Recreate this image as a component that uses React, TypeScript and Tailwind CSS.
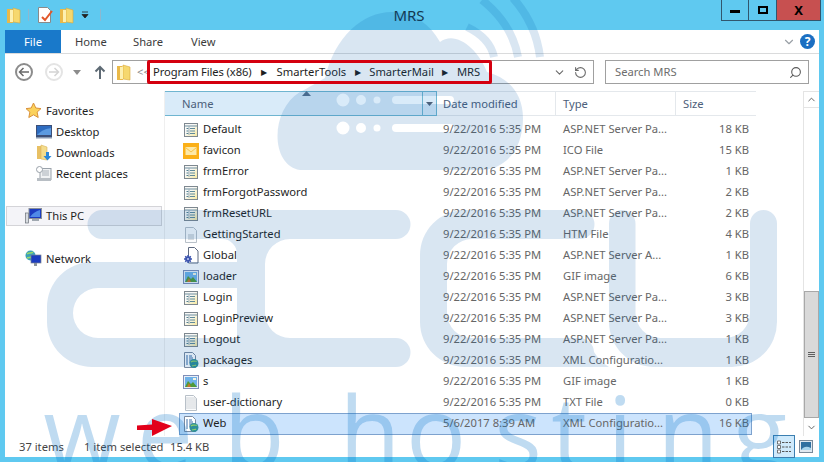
import { ChevronDown, ChevronUp, RotateCw, Search } from 'lucide-react';

type Kind = 'aspx' | 'ico' | 'htm' | 'asax' | 'gif' | 'xml' | 'txt';

const files: { name: string; date: string; type: string; size: string; kind: Kind }[] = [
  { name: 'Default', date: '9/22/2016 5:35 PM', type: 'ASP.NET Server Pa...', size: '18 KB', kind: 'aspx' },
  { name: 'favicon', date: '9/22/2016 5:35 PM', type: 'ICO File', size: '15 KB', kind: 'ico' },
  { name: 'frmError', date: '9/22/2016 5:35 PM', type: 'ASP.NET Server Pa...', size: '1 KB', kind: 'aspx' },
  { name: 'frmForgotPassword', date: '9/22/2016 5:35 PM', type: 'ASP.NET Server Pa...', size: '2 KB', kind: 'aspx' },
  { name: 'frmResetURL', date: '9/22/2016 5:35 PM', type: 'ASP.NET Server Pa...', size: '2 KB', kind: 'aspx' },
  { name: 'GettingStarted', date: '9/22/2016 5:35 PM', type: 'HTM File', size: '4 KB', kind: 'htm' },
  { name: 'Global', date: '9/22/2016 5:35 PM', type: 'ASP.NET Server A...', size: '1 KB', kind: 'asax' },
  { name: 'loader', date: '9/22/2016 5:35 PM', type: 'GIF image', size: '6 KB', kind: 'gif' },
  { name: 'Login', date: '9/22/2016 5:35 PM', type: 'ASP.NET Server Pa...', size: '3 KB', kind: 'aspx' },
  { name: 'LoginPreview', date: '9/22/2016 5:35 PM', type: 'ASP.NET Server Pa...', size: '3 KB', kind: 'aspx' },
  { name: 'Logout', date: '9/22/2016 5:35 PM', type: 'ASP.NET Server Pa...', size: '1 KB', kind: 'aspx' },
  { name: 'packages', date: '9/22/2016 5:35 PM', type: 'XML Configuratio...', size: '1 KB', kind: 'xml' },
  { name: 's', date: '9/22/2016 5:35 PM', type: 'GIF image', size: '1 KB', kind: 'gif' },
  { name: 'user-dictionary', date: '9/22/2016 5:35 PM', type: 'TXT File', size: '0 KB', kind: 'txt' },
];

const webLetters = [
  ['w', 82], ['e', 165], ['b', 254], ['h', 370], ['o', 436], ['s', 518],
  ['t', 569], ['i', 620], ['n', 688], ['g', 760],
] as const;

function FolderIcon() {
  return (
    <svg width="16" height="18" viewBox="0 0 16 18">
      <path d="M1 3h5l1 1v13H1z" fill="#eab948" />
      <path d="M7 2l7 2v13l-7-1z" fill="#f6d86e" stroke="#d9a83a" strokeWidth="0.6" />
      <path d="M4 4h3v12H4z" fill="#fdf0b0" />
    </svg>
  );
}

function FileIcon({ kind }: { kind: Kind }) {
  if (kind === 'ico') {
    return (
      <svg width="16" height="16" viewBox="0 0 16 16">
        <rect width="16" height="16" fill="#fbb018" />
        <rect x="2.500" y="4" width="11" height="8" fill="#fde9a8" />
        <path d="M2.500 4.500L8 9l5.500-4.500" fill="none" stroke="#f6c34a" />
      </svg>
    );
  }
  if (kind === 'gif') {
    return (
      <svg width="16" height="14" viewBox="0 0 16 14">
        <rect x="0.500" y="0.500" width="15" height="13" fill="#e8eef8" stroke="#7f8fb8" />
        <rect x="2" y="2" width="12" height="10" fill="#6fb2e8" />
        <path d="M2 12l3-6 3 3 2-2 4 5z" fill="#4f9a3a" />
        <path d="M4 12l2-4 2 4z" fill="#c9762c" />
        <rect x="10" y="3" width="3" height="2" fill="#f4f4e0" />
      </svg>
    );
  }
  if (kind === 'htm' || kind === 'txt') {
    return (
      <svg width="16" height="16" viewBox="0 0 16 16">
        <path d="M2.500 0.500h8l3 3v12h-11z" fill="#fbfcfd" stroke="#b8c0c8" />
        {kind === 'htm' ? (
          <path d="M5 8h6M5 10h6M5 12h6" stroke="#b4bcc4" />
        ) : (
          <path d="M3 3h10M3 5h10M3 7h10M3 9h10M3 11h10M3 13h10" stroke="#d0d4d8" />
        )}
      </svg>
    );
  }
  if (kind === 'asax') {
    return (
      <svg width="16" height="17" viewBox="0 0 16 17">
        <path d="M5.500 0.500h6l3.500 3.500v12h-9.500z" fill="#fff" stroke="#5f6a80" />
        <path d="M5 8v8M1 12h8M2.200 9.200l5.600 5.600M7.800 9.200l-5.600 5.600" stroke="#3d55b0" strokeWidth="1.400" />
        <circle cx="5" cy="12" r="2.800" fill="#3d55b0" />
        <circle cx="5" cy="12" r="1" fill="#c6d2f4" />
      </svg>
    );
  }
  if (kind === 'xml') {
    return (
      <svg width="16" height="17" viewBox="0 0 16 17">
        <path d="M1.500 0.500h8l3 3v12h-11z" fill="#fff" stroke="#7a8aa0" />
        <path d="M3 4h2M6 4h3M3 6h2M6 6h4M3 8h2M6 8h4M3 10h2M6 10h2M3 12h2" stroke="#3a6ea8" />
        <circle cx="11" cy="11.500" r="4.500" fill="#2f8f9a" />
        <path d="M8 10c2-2 4 0 6-1M9 14c2-1 3 0 4-1" stroke="#8ed06a" fill="none" strokeWidth="1.200" />
      </svg>
    );
  }
  return (
    <svg width="16" height="16" viewBox="0 0 16 16">
      <defs>
        <linearGradient id="aspxFill" x1="0" y1="0" x2="1" y2="1">
          <stop offset="0.400" stopColor="#f8f8f6" />
          <stop offset="1" stopColor="#f6e89a" />
        </linearGradient>
      </defs>
      <rect x="1.500" y="1.500" width="13" height="13" fill="url(#aspxFill)" stroke="#7e8890" />
      <path d="M2 4h12" stroke="#6f8f9f" />
      <path d="M3.500 6h2v1h-2zM3.500 8.500h2v1h-2zM3.500 11h2v1h-2z" fill="#4f7f8f" />
      <path d="M7 6.500h5M7 9h5M7 11.500h5" stroke="#5f8a9a" />
      <path d="M6 4v9" stroke="#9fb0b8" />
    </svg>
  );
}

function NavIcon({ name }: { name: string }) {
  if (name === 'star') {
    return (
      <svg width="17" height="17" viewBox="0 0 17 17">
        <path d="M8.500 1l2.300 5 5.200.6-3.900 3.500 1.100 5.400-4.700-2.700-4.700 2.700 1.100-5.400L1 6.600l5.200-.6z" fill="#fbd25c" stroke="#d9913a" />
      </svg>
    );
  }
  if (name === 'desktop') {
    return (
      <svg width="16" height="14" viewBox="0 0 16 14">
        <rect width="16" height="12" fill="#3c4f78" />
        <rect x="1" y="1" width="14" height="9" fill="#2e6cc0" />
        <path d="M1 10c5-5 9-6 14-7v7z" fill="#5c9ae0" />
        <rect y="12" width="16" height="1.500" fill="#8898b0" />
      </svg>
    );
  }
  if (name === 'downloads') {
    return (
      <svg width="16" height="17" viewBox="0 0 16 17">
        <path d="M1 2h5v13H1z" fill="#e8c064" />
        <path d="M5 1l6 2v13l-6-1z" fill="#f4dc8c" stroke="#d9b45a" strokeWidth="0.600" />
        <path d="M10 8h3v4h2.500l-4 4.500-4-4.500H10z" fill="#2a86d8" />
      </svg>
    );
  }
  if (name === 'recent') {
    return (
      <svg width="16" height="16" viewBox="0 0 16 16">
        <rect x="4" y="2.500" width="11" height="11" fill="#f0f2f4" stroke="#9aa2aa" />
        <path d="M6 5h7M6 7h7M6 9h7" stroke="#a8b0b8" />
        <circle cx="3.500" cy="3.500" r="3" fill="#fff" stroke="#98a0a8" />
        <rect x="1" y="12" width="14" height="3" fill="#b8bec4" />
      </svg>
    );
  }
  if (name === 'pc') {
    return (
      <svg width="17" height="16" viewBox="0 0 17 16">
        <rect x="0.500" y="5" width="3" height="10" fill="#d8dce0" stroke="#6a7078" strokeWidth="0.700" />
        <rect x="4" y="0.500" width="12.500" height="10" fill="#1c3cc0" stroke="#8a9098" />
        <path d="M5 9c3-4 6-6 10-7v7z" fill="#4f8ae8" />
        <rect x="7" y="11" width="7" height="2" fill="#a0a8b0" />
      </svg>
    );
  }
  return (
    <svg width="17" height="17" viewBox="0 0 17 17">
      <circle cx="5.500" cy="5.500" r="5" fill="#3aa0b8" />
      <path d="M2 4c2-2 4 0 6-2M2 8c2-1 3 0 5-1" stroke="#9ad86a" strokeWidth="1.500" fill="none" />
      <rect x="6" y="5" width="10" height="8" fill="#1c3cc0" stroke="#7a8290" strokeWidth="0.700" />
      <rect x="9" y="13" width="3" height="3" fill="#8a929a" />
    </svg>
  );
}

function NavItem({ icon, label, indent }: { icon: string; label: string; indent?: boolean }) {
  return (
    <div className={`flex items-center gap-[4px] h-[21px] text-[#1e1e1e] ${indent ? 'pl-[30px]' : 'pl-[20px]'}`}>
      <span className="w-[17px] flex justify-center shrink-0">
        <NavIcon name={icon} />
      </span>
      <span>{label}</span>
    </div>
  );
}

function FileRow({ file, selected }: { file: (typeof files)[number]; selected?: boolean }) {
  return (
    <div
      className={`grid grid-cols-[264px_120px_120px_66px] items-center w-[573px] ${
        selected ? 'h-[22px] bg-[#cce4fd] ring-1 ring-inset ring-[#7da2ce]' : 'h-[21px]'
      }`}
    >
      <div className="flex items-center gap-[4px] pl-[4px] text-[#1e1e1e]">
        <FileIcon kind={file.kind} />
        <span className="-translate-y-px">{file.name}</span>
      </div>
      <span className="-translate-y-px text-[#666]">{file.date}</span>
      <span className="-translate-y-px text-[#666]">{file.type}</span>
      <span className="-translate-y-px text-right text-[#666]">{file.size}</span>
    </div>
  );
}

function Watermark() {
  return (
    <svg className="absolute top-0 left-0 z-10 pointer-events-none" width="824" height="462" viewBox="0 0 824 462">
      {/* cloud with the server dots cut out */}
      <path
        fillRule="evenodd"
        fill="rgba(0,90,170,0.15)"
        d="M300 170C270 165 270 110 300 92C308 88 318 82 325 78C335 35 365 10 395 12C415 14 430 24 440 42C455 30 478 48 487 72C510 78 523 95 523 118C523 150 505 170 480 170Z
           M336.500 100a6.500 6.500 0 1 0 13 0a6.500 6.500 0 1 0 -13 0Z M356 100a5 5 0 1 0 10 0a5 5 0 1 0 -10 0Z M373.500 100a3.500 3.500 0 1 0 7 0a3.500 3.500 0 1 0 -7 0Z M396 96h54a4 4 0 0 1 0 8h-54a4 4 0 0 1 0-8Z
           M336.500 128a6.500 6.500 0 1 0 13 0a6.500 6.500 0 1 0 -13 0Z M356 128a5 5 0 1 0 10 0a5 5 0 1 0 -10 0Z M373.500 128a3.500 3.500 0 1 0 7 0a3.500 3.500 0 1 0 -7 0Z M396 124h54a4 4 0 0 1 0 8h-54a4 4 0 0 1 0-8Z"
      />
      <g fill="none" stroke="rgba(0,90,170,0.15)" strokeWidth="8">
        <path d="M467 27Q490 38 494 57" />
        <path d="M482 0Q512 24 518 57" />
        <path d="M513 -2Q536 24 540 57" />
      </g>
      {/* accu */}
      <g fill="rgba(0,90,170,0.15)" fillRule="evenodd">
        <path d="M102 210H396a14.500 14.500 0 0 1 0 29H290a25 25 0 0 0 -25 25V313a25 25 0 0 0 25 25H396a14.500 14.500 0 0 1 0 29H92a45 45 0 0 1 -45 -45V307a45 45 0 0 1 45 -45H237V254a15 15 0 0 0 -15 -15H102a14.500 14.500 0 0 1 0 -29Z M98 288a25 25 0 0 0 -25 25a25 25 0 0 0 25 25H237V288Z" />
        <path d="M465 210H580a14.500 14.500 0 0 1 0 29H472a25 25 0 0 0 -25 25V313a25 25 0 0 0 25 25H580a14.500 14.500 0 0 1 14 14A45 45 0 0 0 609 367H465a45 45 0 0 1 -45 -45V255a45 45 0 0 1 45 -45Z" />
        <path d="M622 210a13.500 13.500 0 0 1 13.500 13.500V313a25 25 0 0 0 25 25H725a25 25 0 0 0 25 -25V223.500a13.500 13.500 0 0 1 27 0V322a45 45 0 0 1 -45 45H654a45 45 0 0 1 -45 -45V223.500A13.500 13.500 0 0 1 622 210Z" />
      </g>
      {/* web hosting */}
      <g fill="rgba(0,110,200,0.25)" className="font-['Open_Sans',sans-serif]" fontSize="100" textAnchor="middle">
        {webLetters.map(([letter, x]) => (
          <text key={letter} x={x} y="469">
            {letter}
          </text>
        ))}
      </g>
    </svg>
  );
}

export default function App() {
  return (
    <div className="relative w-[824px] h-[462px] overflow-hidden bg-[#5fc9f0] font-['Noto_Sans','Open_Sans',sans-serif] text-[11.2px] leading-none whitespace-nowrap px-[5px] pb-[5px] flex flex-col">
      <Watermark />

      {/* title bar */}
      <div className="relative h-[30px] flex items-start shrink-0">
        <div className="flex items-center gap-[6px] h-[30px] pl-[1px]">
          <FolderIcon />
          <span className="w-px h-[12px] bg-[#8cb8d0]" />
          <svg width="16" height="16" viewBox="0 0 16 16" className="ml-[2px]">
            <path d="M1.500 0.500h9l3 3v12h-12z" fill="#fff" stroke="#8a8a8a" />
            <path d="M5 10l3 3 7-9" stroke="#e2572a" strokeWidth="2" fill="none" />
          </svg>
          <FolderIcon />
          <svg width="8" height="8" viewBox="0 0 8 8">
            <path d="M1 1h6M1 3.500h6L4 7z" stroke="#222" fill="#222" strokeWidth="0.800" />
          </svg>
          <span className="w-px h-[12px] bg-[#8cb8d0] ml-[5px]" />
        </div>
        <span className="absolute left-[404px] top-[8px] -translate-x-1/2 text-[15px] text-[#14384f]">MRS</span>
        <div className="ml-auto -mr-[2px] flex h-[21px]">
          <div className="w-[28px] border border-t-0 border-[#31566e] flex items-center justify-center">
            <span className="w-[10px] h-[3px] bg-black mt-[3px]" />
          </div>
          <div className="w-[27px] border-b border-[#31566e] flex items-center justify-center">
            <span className="w-[10px] h-[8px] border-2 border-black" />
          </div>
          <div className="w-[45px] border border-t-0 border-[#31566e] bg-[#c75050] flex items-center justify-center text-[13px] font-bold text-black">
            X
          </div>
        </div>
      </div>

      <div className="flex-1 flex flex-col bg-white min-h-0">
        {/* ribbon tabs */}
        <div className="h-[24px] flex items-center border-b border-[#dadbdc] text-[#3c3c3c] shrink-0">
          <div className="w-[56px] h-[23px] bg-[#1979ca] text-white flex items-center justify-center">File</div>
          <span className="ml-[14px] w-[58px]">Home</span>
          <span className="w-[58px]">Share</span>
          <span>View</span>
          <ChevronDown className="ml-auto text-[#9aa0a6]" size={14} />
          <span className="ml-[4px] mr-[4px] w-[15px] h-[15px] rounded-full bg-[#1b6fc2] text-white font-bold text-[12px] flex items-center justify-center">
            ?
          </span>
        </div>

        {/* address row */}
        <div className="h-[36px] mb-px flex items-center shrink-0 text-[#1e1e1e]">
          <span className="ml-[10px] w-[18px] h-[18px] rounded-full border-2 border-[#8c8c8c] flex items-center justify-center">
            <svg width="12" height="10" viewBox="0 0 12 10">
              <path d="M11 5H2M5.500 1L1.500 5l4 4" stroke="#6a6a6a" strokeWidth="1.500" fill="none" />
            </svg>
          </span>
          <span className="ml-[12px] w-[18px] h-[18px] rounded-full border-2 border-[#e4e4e4] flex items-center justify-center">
            <svg width="12" height="10" viewBox="0 0 12 10">
              <path d="M1 5h9M6.500 1l4 4-4 4" stroke="#d4d4d4" strokeWidth="1.500" fill="none" />
            </svg>
          </span>
          <svg width="8" height="5" viewBox="0 0 8 5" className="ml-[10px]">
            <path d="M0 0h8L4 5z" fill="#8c8c8c" />
          </svg>
          <svg width="12" height="14" viewBox="0 0 12 14" className="ml-[13px]">
            <path d="M6 14V2M1.500 6.500L6 2l4.500 4.500" stroke="#5e6a74" strokeWidth="2" fill="none" />
          </svg>
          <div className="ml-[6px] w-[482px] h-[24px] border border-[#a0a0a0] flex items-center">
            <span className="ml-[3px] w-[16px]">
              <FolderIcon />
            </span>
            <span className="ml-[5px] w-[10px] text-[#8a8a8a]">{'<<'}</span>
            <div className="relative w-[345px] h-[24px] shrink-0 flex items-center pl-[6px] text-[#1e1e1e]">
              <span className="tracking-[-0.1px]">Program Files (x86)</span>
              <span className="mx-[9.5px] text-[8px]">▶</span>
              <span>SmarterTools</span>
              <span className="mx-[8.5px] text-[8px]">▶</span>
              <span>SmarterMail</span>
              <span className="mx-[8.5px] text-[8px]">▶</span>
              <span>MRS</span>
              <div className="absolute inset-0 z-20 border-[3px] border-[#d4000f] rounded-[2px]" />
            </div>
            <ChevronDown className="ml-auto text-[#6a6a6a]" size={13} />
            <RotateCw className="ml-[8px] mr-[6px] text-[#6a6a6a] -scale-x-100" size={13} />
          </div>
          <div className="ml-[11px] w-[204px] h-[24px] border border-[#a0a0a0] flex items-center pl-[9px] text-[#6d6d6d]">
            <span>Search MRS</span>
            <Search className="ml-auto mr-[6px] text-[#5a5a5a] -scale-x-100" size={13} />
          </div>
        </div>

        {/* panes */}
        <div className="flex-1 flex min-h-0">
          <nav className="w-[160px] shrink-0 pt-[9px] border-r border-[#efefef]">
            <NavItem icon="star" label="Favorites" />
            <NavItem icon="desktop" label="Desktop" indent />
            <NavItem icon="downloads" label="Downloads" indent />
            <NavItem icon="recent" label="Recent places" indent />
            <div className="mt-[22px] ml-px w-[156px] h-[20px] border border-[#d4d4d8] bg-[#f4f4f8] flex items-center">
              <div className="-ml-[2px]">
                <NavItem icon="pc" label="This PC" />
              </div>
            </div>
            <div className="mt-[22px]">
              <NavItem icon="network" label="Network" />
            </div>
          </nav>

          <div className="flex-1 min-w-0 flex flex-col">
            <div className="h-[25px] flex text-[#4c607a] shrink-0">
              <div className="w-[257px] bg-[#d9ebf9] border-y border-[#6fb5d0] flex items-center pl-[17px] relative">
                Name
                <svg width="9" height="5" viewBox="0 0 9 5" className="absolute left-[137px] -top-[1px]">
                  <path d="M0 5L4.500 0 9 5z" fill="#56708c" />
                </svg>
              </div>
              <div className="w-[15px] bg-[#d9ebf9] border border-[#6fb5d0] flex items-center justify-center">
                <svg width="7" height="4" viewBox="0 0 7 4">
                  <path d="M0 0h7L3.500 4z" fill="#4c607a" />
                </svg>
              </div>
              <div className="w-[119px] border-y border-r border-[#e4e8ec] flex items-center pl-[6px]">Date modified</div>
              <div className="w-[120px] border-y border-r border-[#e4e8ec] flex items-center pl-[7px]">Type</div>
              <div className="w-[80px] border-y border-[#e4e8ec] flex items-center pl-[7px]">Size</div>
            </div>
            <div className="pt-[3px] pl-[14px]">
              {files.map((file) => (
                <FileRow key={file.name} file={file} />
              ))}
              <FileRow
                selected
                file={{ name: 'Web', date: '5/6/2017 8:39 AM', type: 'XML Configuratio...', size: '16 KB', kind: 'xml' }}
              />
            </div>
          </div>

          {/* scrollbar */}
          <div className="w-[16px] shrink-0 flex flex-col border-l border-[#e4e4e4]">
            <div className="h-[17px] flex items-center justify-center border-y border-[#e4e4e4] text-[#5a5a5a]">
              <ChevronUp size={11} />
            </div>
            <div className="h-[183px]" />
            <div className="h-[127px] bg-[#d9d9d9] border border-[#a8a8a8] flex flex-col items-center justify-center gap-[1px]">
              <span className="w-[7px] h-px bg-[#5f5f5f]" />
              <span className="w-[7px] h-px bg-[#5f5f5f]" />
              <span className="w-[7px] h-px bg-[#5f5f5f]" />
            </div>
            <div className="h-[18px] flex items-center justify-center text-[#5a5a5a]">
              <ChevronDown size={11} />
            </div>
          </div>
        </div>

        {/* status bar */}
        <div className="h-[21px] flex items-center text-[#444] shrink-0 pl-[14px]">
          <span className="w-[65px]">37 items</span>
          <span className="w-[86px]">1 item selected</span>
          <span>15.4 KB</span>
          <div className="ml-auto mr-[6px] flex items-center gap-[4px]">
            <span className="w-[22px] h-[23px] bg-[#cfeafc] border border-[#3c7fb1] flex items-center justify-center">
              <svg width="14" height="14" viewBox="0 0 14 14">
                <path d="M0.500 1h3v3h-3zM0.500 5.500h3v3h-3zM0.500 10h3v3h-3z" fill="#fff" stroke="#555" strokeWidth="0.800" />
                <path d="M5 2.500h9M5 7h9M5 11.500h9" stroke="#555" strokeDasharray="2.500 1" />
              </svg>
            </span>
            <svg width="14" height="13" viewBox="0 0 14 13">
              <rect x="0.500" y="0.500" width="13" height="12" fill="#dfe8f0" stroke="#7a8a9a" />
              <rect x="2" y="2" width="10" height="8" fill="#2f6f9f" />
              <path d="M2 10c3-4 6-4 10-2v2z" fill="#a8d4ec" />
            </svg>
          </div>
        </div>
      </div>

      {/* annotation arrow */}
      <svg className="absolute left-[137px] top-[419px] z-20" width="35" height="17" viewBox="0 0 35 17">
        <path d="M0 6.500L15 5.500V0L35 7 15 17V11H0z" fill="#e2001a" />
      </svg>
    </div>
  );
}
